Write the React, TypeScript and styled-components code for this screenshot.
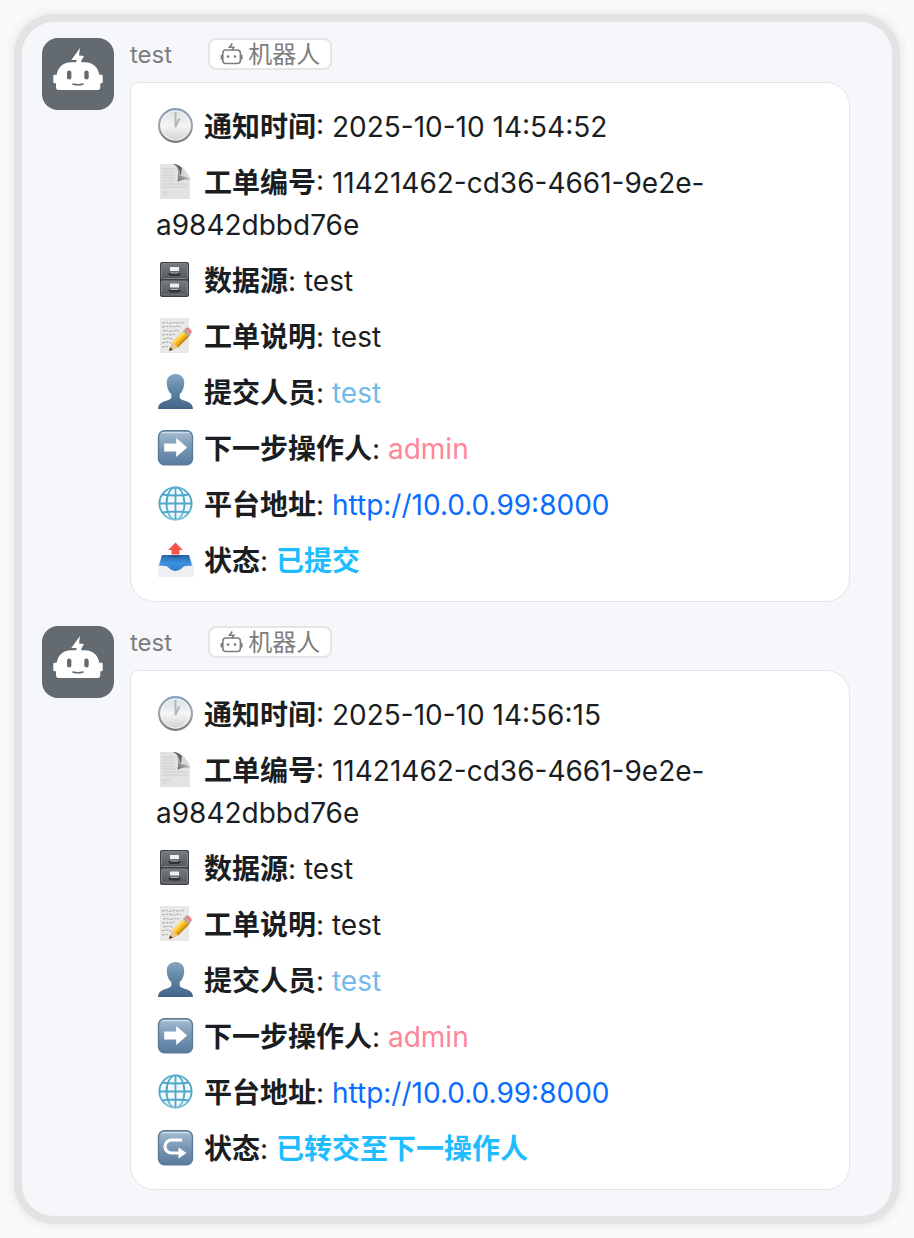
import React from "react";
import styled, { createGlobalStyle } from "styled-components";

const GlobalStyle = createGlobalStyle`
  *, *::before, *::after { box-sizing: border-box; }
  body {
    margin: 0;
    background: #fafafa;
    color: #1a1e22;
    font-family: Inter, "Noto Sans CJK SC", sans-serif;
  }
`;

const Page = styled.main`
  padding: 22px;
`;

const ChatPanel = styled.section`
  display: flex;
  flex-direction: column;
  gap: 24px;
  padding: 16px 42px 26px 20px;
  border-radius: 32px;
  background: #f5f7fb;
  box-shadow: 0 0 0 8px #e3e3e3, 0 0 0 11px #f1f1f1, 0 0 0 15px #f6f6f6;
`;

const Message = styled.article`
  display: flex;
  align-items: flex-start;
  gap: 16px;
`;

const Avatar = styled.svg`
  flex: none;
  width: 72px;
  height: 72px;
  border-radius: 16px;
  background: #646b70;
`;

const Body = styled.div`
  flex: 1;
  min-width: 0;
`;

const Header = styled.header`
  display: flex;
  align-items: center;
  gap: 36px;
  height: 32px;
  margin-bottom: 12px;
  color: #7d7d7d;
  font-size: 24px;
  line-height: 32px;
`;

const Sender = styled.span`
  padding-top: 2px;
`;

const Badge = styled.span`
  display: flex;
  align-items: center;
  gap: 4px;
  height: 32px;
  padding: 2px 10px 0;
  border: 2px solid #e5e5e5;
  border-radius: 8px;
  background: #fff;
  line-height: 28px;
`;

const BadgeIcon = styled.svg`
  width: 24px;
  height: 24px;
`;

const Card = styled.div`
  display: flex;
  flex-direction: column;
  gap: 14px;
  padding: 23px 25px 19px;
  border: 1px solid #e2e4e8;
  border-radius: 8px 24px 24px 24px;
  background: #fff;
`;

const Row = styled.p`
  margin: 0;
  font-size: 28px;
  line-height: 42px;
`;

const Emoji = styled.svg`
  width: 38px;
  height: 36px;
  margin: 0 9px 0 1px;
  vertical-align: -7px;
`;

const Label = styled.strong`
  font-weight: 700;
`;

const Person = styled.span<{ $color: string }>`
  color: ${(p) => p.$color};
`;

const Status = styled.strong`
  color: #1fbcff;
  font-weight: 700;
`;

const Link = styled.a`
  color: #0a6cff;
  text-decoration: none;
`;

const Defs = styled.svg`
  position: absolute;
  width: 0;
  height: 0;
`;

function Gradient({ id, stops }: { id: string; stops: string[] }) {
  return (
    <linearGradient id={id} x1="0" y1="0" x2="0" y2="1">
      {stops.map((color, i) => (
        <stop key={i} offset={i / (stops.length - 1)} stopColor={color} />
      ))}
    </linearGradient>
  );
}

function IconDefs() {
  return (
    <Defs aria-hidden="true">
      <defs>
        <Gradient id="clockRim" stops={["#86a0bd", "#a4a7ab", "#77797d"]} />
        <Gradient id="clockFace" stops={["#d9dde1", "#f5f5f5", "#cfcfd1"]} />
        <Gradient id="cabinet" stops={["#777b7f", "#55595d"]} />
        <Gradient id="person" stops={["#83a6c2", "#5c82a4", "#426689"]} />
        <Gradient id="key" stops={["#a6bdd0", "#7797b5", "#597b9e"]} />
        <Gradient id="globe" stops={["#5ab0d0", "#4a9fc4", "#7fc4d8"]} />
        <Gradient id="tray" stops={["#2765a9", "#3d92e0", "#2a7ccb"]} />
        <linearGradient id="curl" x1="0" y1="1" x2="1" y2="0">
          <stop offset="0" stopColor="#55585a" />
          <stop offset="0.5" stopColor="#a9abac" />
          <stop offset="1" stopColor="#e4e5e6" />
        </linearGradient>
      </defs>
    </Defs>
  );
}

type IconName =
  | "clock"
  | "page"
  | "cabinet"
  | "memo"
  | "person"
  | "next"
  | "globe"
  | "outbox"
  | "forward";

const drawings: Record<IconName, React.ReactNode> = {
  clock: (
    <>
      <circle cx="18.5" cy="17.5" r="16.4" fill="url(#clockFace)" stroke="url(#clockRim)" strokeWidth="2.2" />
      <circle cx="18.5" cy="17.5" r="14.6" fill="none" stroke="#fff" strokeOpacity="0.6" strokeWidth="1" />
      <path d="M18.5 4V18.5l4-8" fill="none" stroke="#b4b5b7" strokeWidth="2" strokeLinejoin="round" />
    </>
  ),
  page: (
    <>
      <path d="M3 0h16c3 2 5 6 5 9l9 7v19H3z" fill="#e3e3e4" />
      <path d="M5 5h12M5 8h12M5 11h13M5 14h13M5 17h13M5 20h26M5 23h25M5 28h8M5 31h5" stroke="#cbcccd" strokeWidth="1" />
      <path d="M17 0c4 2 5 8 3.500 18 3-2 8-3 12.500-2V14z" fill="url(#curl)" />
      <path d="M16 0c8 0 16 8 17 16-3-3-6-4-10-4 0-5-2-10-7-12z" fill="#d5d7d8" />
      <path d="M16 0c4 0 7 2 9 4-1 3 0 5-1.500 8C23 7 21 2 16 0z" fill="#5f6264" />
    </>
  ),
  cabinet: (
    <>
      <rect x="3" y="0" width="29" height="35" rx="2" fill="#3d4043" />
      <rect x="4.5" y="1.5" width="26" height="15" rx="1" fill="url(#cabinet)" stroke="#808488" />
      <rect x="4.5" y="19" width="26" height="14" rx="1" fill="url(#cabinet)" stroke="#808488" />
      <path d="M13 5h9v4h-9zM13 21.5h9v4h-9z" fill="#eeeff0" />
      <path d="M11.5 11h12v1.500l-2 1.500h-8l-2-1.500zM11.500 27.500h12V29l-2 1.500h-8l-2-1.500z" fill="#303336" />
      <path d="M13.500 11h8M13.500 27.500h8" stroke="#b5b8bb" />
    </>
  ),
  memo: (
    <>
      <rect x="3" y="0" width="29" height="35" fill="#e9e9e8" />
      <path
        d="M5 5l5-.5 2 1 5-1 4 .5 6-.5M5 9l7-1 4 1 5-1 3 1M6 13l4-.5 3 1 6-1 3 .5M5 17l6-.5 3 .5 4-1M6 21l5-1 5 1M5 25l5-1 4 1M5 29l4-.5 3 .5"
        fill="none"
        stroke="#a5a5a5"
        strokeWidth="1"
        strokeDasharray="3 1 2 1"
      />
      <path d="M12 33l3.500-9L27.500 12l5.500 5.500-12 12z" fill="#f4b61e" />
      <path d="M15.500 24l12-12 2 2-12 12z" fill="#ffd957" />
      <path d="M19.500 28l12-12 1.500 1.500-12 12z" fill="#cf8a16" />
      <path d="M12 33l3.500-9 5.500 5.500z" fill="#edc48c" />
      <path d="M12 33l1.200-3.800 2.600 2.600z" fill="#3b3733" />
      <path d="M26 13l2-2 5.500 5.500-2 2z" fill="#a6abae" />
      <path d="M28 11c1.500-2 3-1.800 5 0s2.300 3.500.5 5.500z" fill="#ec7f86" />
    </>
  ),
  person: (
    <path
      d="M18.500 0c5.500 0 8.700 3.600 8.700 8.500 0 5.500-2 9.500-4.500 11.500v3.500c0 1.500 2 2.300 5 3.200 5 1.500 8 3.300 8.300 8.300H1c.3-5 3.300-6.800 8.300-8.300 3-.9 5-1.700 5-3.200V20c-2.500-2-4.500-6-4.500-11.500C9.800 3.600 13 0 18.500 0z"
      fill="url(#person)"
    />
  ),
  next: (
    <>
      <rect x="1.500" y="0.700" width="34" height="34" rx="6" fill="url(#key)" stroke="#5b7a98" strokeWidth="1.400" />
      <path d="M5 2.700h27" stroke="#dbe7f0" strokeWidth="1" strokeLinecap="round" />
      <path d="M7.200 13.500h12V8L30.200 17.500 19.200 27v-5.500h-12z" fill="#fff" />
    </>
  ),
  globe: (
    <>
      <circle cx="18.500" cy="17.500" r="16.300" fill="#f3fafd" />
      <g fill="none" stroke="url(#globe)" strokeWidth="1.900">
        <circle cx="18.500" cy="17.500" r="16.100" />
        <ellipse cx="18.500" cy="17.500" rx="9" ry="16.100" />
      </g>
      <path d="M18.500 1.500v32M2.500 17.500h32M5 8.500q13.500 2 27 0M5 26.500q13.500-2 27 0" fill="none" stroke="#4fa7ca" strokeWidth="1.800" />
    </>
  ),
  outbox: (
    <>
      <path d="M5 13h27l4.500 11v9.500q0 1.500-1.500 1.500H2.500Q1 35 1 33.500V24z" fill="#d9dadd" />
      <path d="M5 13h27l3 11-7 6H9l-7-6z" fill="url(#tray)" />
      <path d="M1 23.500l8 .5c3 1 4.500 5 9.500 5s6.500-4 9.500-5l8.500-.5v10q0 1.500-1.500 1.500H2.500Q1 35 1 33.500z" fill="#efeff1" />
      <path d="M11.500 13q7 2 14 0v1q-7 3-14 0z" fill="#1e5793" />
      <path d="M18.500 0.500l7.500 7.500h-3.500v4.500h-8V8H11z" fill="#f4574d" />
    </>
  ),
  forward: (
    <>
      <rect x="1.500" y="0.700" width="34" height="34" rx="6" fill="url(#key)" stroke="#5b7a98" strokeWidth="1.400" />
      <path d="M5 2.700h27" stroke="#dbe7f0" strokeWidth="1" strokeLinecap="round" />
      <path d="M25 10H14.500a6.500 6.500 0 0 0 0 13h8" fill="none" stroke="#fff" strokeWidth="3.200" />
      <path d="M21.500 17.500l8 5.500-8 5.500z" fill="#fff" />
    </>
  ),
};

function Icon({ name }: { name: IconName }) {
  return (
    <Emoji viewBox="0 0 38 36" aria-hidden="true">
      {drawings[name]}
    </Emoji>
  );
}

function RobotAvatar() {
  return (
    <Avatar viewBox="0 0 72 72" aria-hidden="true">
      <path d="M38 10l-8.700 12h5.500L33.500 26h6l-.3-3L42 18l-5-.500z" fill="#fff" />
      <path
        d="M29 24.300h14c8 0 13 5 14.300 12.400h2.200q1.200 0 1.200 1.200v6.200q0 1.200-1.200 1.200h-1.200v4q0 2.700-2.700 2.700H16.700q-2.700 0-2.700-2.700v-4h-1.500q-1.200 0-1.200-1.200v-6.200q0-1.200 1.200-1.200h2.200C16 29.300 21 24.300 29 24.300z"
        fill="#fff"
      />
      <rect x="25" y="32.500" width="4.400" height="9" rx="2.200" fill="#646b70" />
      <rect x="42.300" y="32.500" width="4.400" height="9" rx="2.200" fill="#646b70" />
      <path d="M31 46q5 1.600 10 0" fill="none" stroke="#646b70" strokeWidth="1.600" strokeLinecap="round" />
    </Avatar>
  );
}

function RobotBadge() {
  return (
    <Badge>
      <BadgeIcon viewBox="0 0 24 24" fill="none" stroke="currentColor" strokeWidth="1.600" aria-hidden="true">
        <rect x="2.800" y="7" width="17.600" height="13.500" rx="3" />
        <path d="M1.400 12v4.500M21.800 12v4.500M12.300 .500L9.500 4.200h4.300L12 7.500" />
        <circle cx="8.100" cy="13.600" r="1.300" fill="currentColor" stroke="none" />
        <circle cx="15" cy="13.600" r="1.300" fill="currentColor" stroke="none" />
      </BadgeIcon>
      机器人
    </Badge>
  );
}

type Notice = { time: string; statusIcon: IconName; status: string };

const notices: Notice[] = [
  { time: "2025-10-10 14:54:52", statusIcon: "outbox", status: "已提交" },
  { time: "2025-10-10 14:56:15", statusIcon: "forward", status: "已转交至下一操作人" },
];

function Field({ icon, label, children }: { icon: IconName; label: string; children: React.ReactNode }) {
  return (
    <Row>
      <Icon name={icon} />
      <Label>{label}</Label>: {children}
    </Row>
  );
}

function NoticeMessage({ notice }: { notice: Notice }) {
  return (
    <Message>
      <RobotAvatar />
      <Body>
        <Header>
          <Sender>test</Sender>
          <RobotBadge />
        </Header>
        <Card>
          <Field icon="clock" label="通知时间">{notice.time}</Field>
          <Field icon="page" label="工单编号">11421462-cd36-4661-9e2e-<wbr />a9842dbbd76e</Field>
          <Field icon="cabinet" label="数据源">test</Field>
          <Field icon="memo" label="工单说明">test</Field>
          <Field icon="person" label="提交人员"><Person $color="#71baea">test</Person></Field>
          <Field icon="next" label="下一步操作人"><Person $color="#ff8598">admin</Person></Field>
          <Field icon="globe" label="平台地址"><Link href="http://10.0.0.99:8000">http://10.0.0.99:8000</Link></Field>
          <Field icon={notice.statusIcon} label="状态"><Status>{notice.status}</Status></Field>
        </Card>
      </Body>
    </Message>
  );
}

export default function App() {
  return (
    <Page>
      <GlobalStyle />
      <IconDefs />
      <ChatPanel>
        {notices.map((notice) => (
          <NoticeMessage key={notice.time} notice={notice} />
        ))}
      </ChatPanel>
    </Page>
  );
}
